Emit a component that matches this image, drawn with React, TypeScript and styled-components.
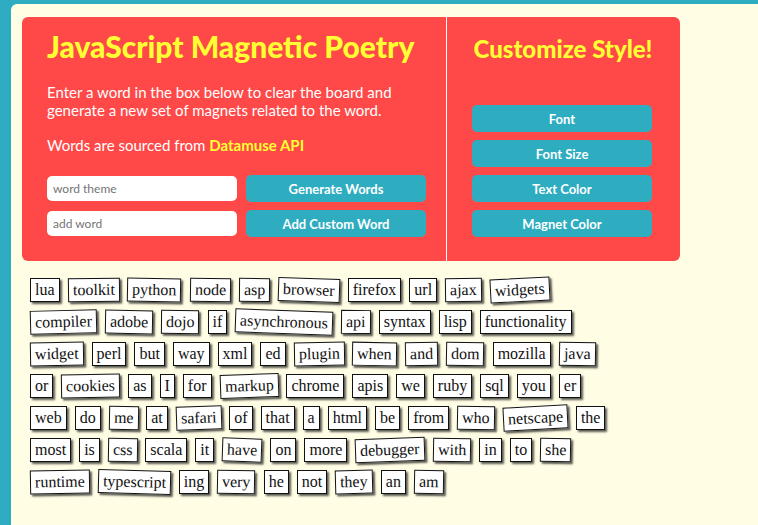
import React from "react";
import styled, { createGlobalStyle } from "styled-components";

const GlobalStyle = createGlobalStyle`
  html, body { margin: 0; padding: 0; }
  body {
    background: #2eacc1;
    font-family: Lato, "Open Sans", sans-serif;
  }
`;

const Page = styled.div`
  margin: 4px 0 0 11px;
  background: #fffde4;
  border-top-left-radius: 6px;
  min-height: 521px;
  padding: 13px 0 0 11px;
  box-sizing: border-box;
`;

const Panel = styled.div`
  display: flex;
  width: 658px;
  height: 244px;
  background: #ff4848;
  border-radius: 6px;
`;

const LeftCol = styled.div`
  width: 425px;
  box-sizing: border-box;
  padding: 12px 21px 0 25px;
  border-right: 1px solid #ffffff;
  display: flex;
  flex-direction: column;
`;

const RightCol = styled.div`
  flex: 1;
  padding: 18px 26px 0 25px;
  display: flex;
  flex-direction: column;
`;

const Title = styled.h1`
  margin: 0;
  font-size: 30px;
  line-height: 35px;
  font-weight: 900;
  color: #ffff33;
  white-space: nowrap;
`;

const SubTitle = styled.h2`
  margin: 0 0 43px;
  font-size: 24px;
  line-height: 27px;
  font-weight: 900;
  color: #ffff33;
  text-align: center;
  white-space: nowrap;
`;

const Text = styled.p<{ $mt: number }>`
  margin: ${(p) => p.$mt}px 0 0;
  font-size: 15px;
  line-height: 18px;
  color: #ffffff;
`;

const Link = styled.span`
  color: #ffff33;
  font-weight: 700;
`;

const Controls = styled.div`
  margin-top: 21px;
  display: grid;
  grid-template-columns: 190px 180px;
  column-gap: 9px;
  row-gap: 8px;
  align-items: center;
`;

const Input = styled.input`
  height: 25px;
  box-sizing: border-box;
  border: none;
  border-radius: 5px;
  padding: 0 6px;
  font-family: Lato, sans-serif;
  font-size: 12px;
  color: #333;
  background: #fff;
  outline: none;
  &::placeholder { color: #757575; }
`;

const Button = styled.button`
  width: 180px;
  height: 27px;
  border: none;
  border-radius: 5px;
  background: #2eadc1;
  color: #ffffff;
  font-family: Lato, sans-serif;
  font-size: 13px;
  font-weight: 700;
  padding: 0;
  cursor: pointer;
`;

const StyleButtons = styled.div`
  display: flex;
  flex-direction: column;
  gap: 8px;
`;

const Board = styled.div`
  margin: 17px 0 0 8px;
  display: flex;
  flex-direction: column;
  gap: 8px;
`;

const Row = styled.div`
  display: flex;
  gap: 8px;
`;

const Magnet = styled.span<{ $rot: number }>`
  display: inline-block;
  background: #ffffff;
  border: 1px solid #111111;
  box-shadow: 2px 2px 2px rgba(0, 0, 0, 0.65);
  padding: 1px 4px;
  font-family: "Liberation Serif", "Times New Roman", serif;
  font-size: 16px;
  line-height: 20px;
  color: #111111;
  transform: rotate(${(p) => p.$rot}deg);
`;

const rows: [string, number][][] = [
  [["lua", 0], ["toolkit", -0.8], ["python", 1], ["node", 0.8], ["asp", 0.5], ["browser", 2], ["firefox", 0], ["url", 0], ["ajax", -0.8], ["widgets", -3]],
  [["compiler", -1.5], ["adobe", 1], ["dojo", 0.5], ["if", 0], ["asynchronous", 2], ["api", 0.5], ["syntax", 0], ["lisp", 0], ["functionality", 0]],
  [["widget", -1], ["perl", 0], ["but", 0], ["way", 0], ["xml", 0], ["ed", 0], ["plugin", -1], ["when", 1], ["and", -1], ["dom", 1], ["mozilla", 0], ["java", 1]],
  [["or", 0], ["cookies", -1], ["as", 0], ["I", 0], ["for", 0], ["markup", -2], ["chrome", 0], ["apis", 0], ["we", 0], ["ruby", 0], ["sql", 0], ["you", 0], ["er", 0]],
  [["web", 0], ["do", 0], ["me", 1], ["at", 0], ["safari", -2], ["of", 0], ["that", 0], ["a", 0], ["html", 0], ["be", 0], ["from", 0], ["who", 1], ["netscape", -3], ["the", 0]],
  [["most", 0], ["is", 0], ["css", 1], ["scala", 0], ["it", 0], ["have", 2], ["on", 0], ["more", 0], ["debugger", -2], ["with", 1], ["in", 0], ["to", 0], ["she", 1]],
  [["runtime", -1], ["typescript", 1.5], ["ing", 0], ["very", 1], ["he", 0], ["not", 0], ["they", -1.5], ["an", 0], ["am", 1]],
];

export default function App() {
  return (
    <>
      <GlobalStyle />
      <Page>
        <Panel>
          <LeftCol>
            <Title>JavaScript Magnetic Poetry</Title>
            <Text $mt={19}>
              Enter a word in the box below to clear the board and generate a new set of magnets related to the word.
            </Text>
            <Text $mt={17}>
              Words are sourced from <Link>Datamuse API</Link>
            </Text>
            <Controls>
              <Input placeholder="word theme" />
              <Button>Generate Words</Button>
              <Input placeholder="add word" />
              <Button>Add Custom Word</Button>
            </Controls>
          </LeftCol>
          <RightCol>
            <SubTitle>Customize Style!</SubTitle>
            <StyleButtons>
              <Button>Font</Button>
              <Button>Font Size</Button>
              <Button>Text Color</Button>
              <Button>Magnet Color</Button>
            </StyleButtons>
          </RightCol>
        </Panel>
        <Board>
          {rows.map((r, i) => (
            <Row key={i}>
              {r.map(([w, rot], j) => (
                <Magnet key={j} $rot={rot}>{w}</Magnet>
              ))}
            </Row>
          ))}
        </Board>
      </Page>
    </>
  );
}
